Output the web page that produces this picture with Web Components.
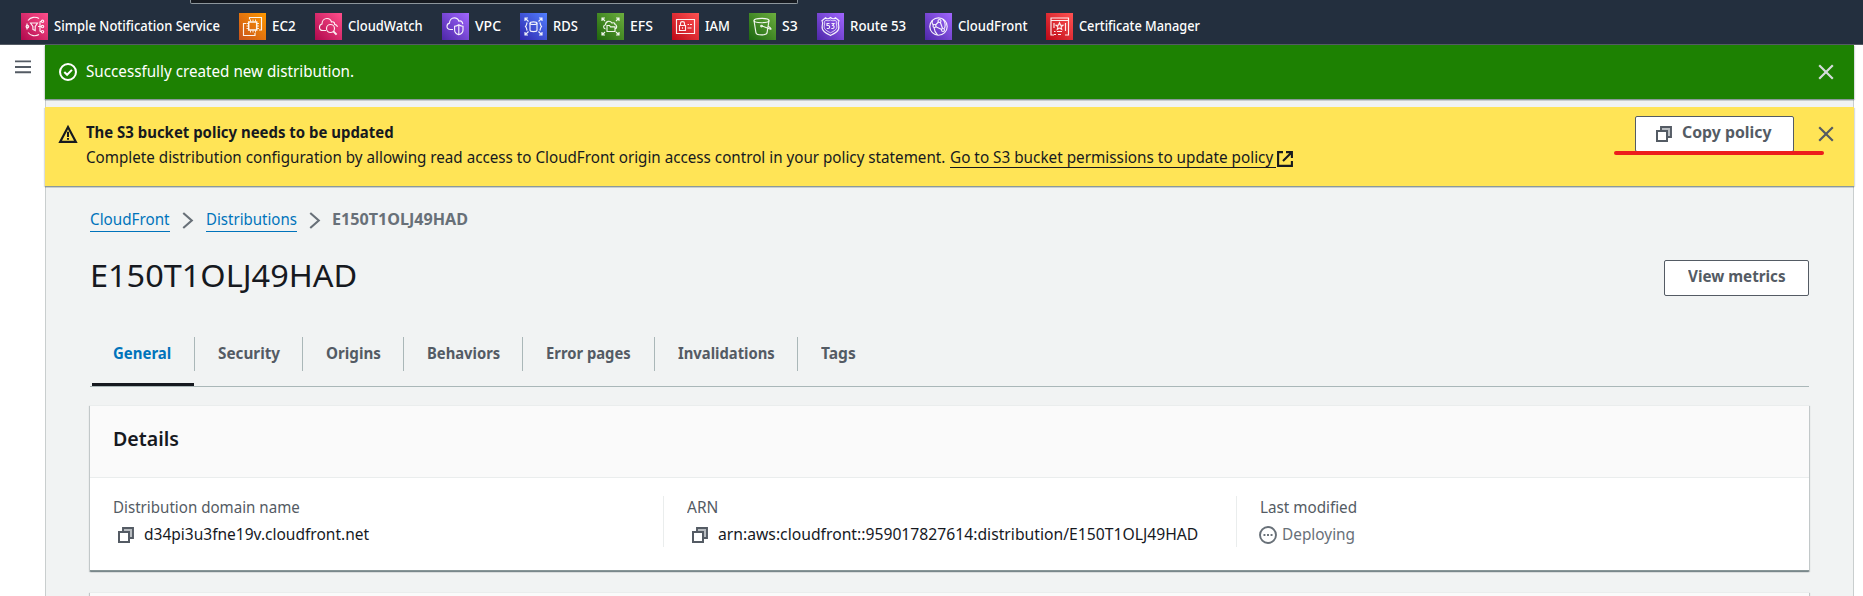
<!DOCTYPE html>
<html lang="en"><head><meta charset="utf-8"><title>CloudFront</title>
<style>
html,body{margin:0;height:100%}
body{font-family:"Noto Sans","Open Sans",sans-serif;font-size:16px;color:#16191f;background:#fff;overflow:hidden}
</style></head><body>
<console-app></console-app>
<script>
const define=(name,html,setup)=>customElements.define(name,class extends HTMLElement{
  connectedCallback(){
    if(this.shadowRoot)return;
    const root=this.attachShadow({mode:'open'});
    root.innerHTML=typeof html==='function'?html(this):html;
    if(setup)setup(this,root);
  }
});

/* A run of text condensed to the width of the console's typeface. */
define('fit-text',el=>`<style>
:host{display:block;flex:none;width:${el.getAttribute('w')}px;white-space:nowrap;overflow:visible}
span{display:inline-block;transform-origin:0 50%;white-space:nowrap}
</style><span><slot></slot></span>`,(el,root)=>{
  const s=root.querySelector('span');
  s.style.transform=`scaleX(${el.getAttribute('w')/s.offsetWidth})`;
});

const ICONS={
  menu:'<path d="M0 1.5h16M0 7.5h16M0 13h16" stroke-width="2"/>',
  close:'<path d="M1.2 1.2l13.600 13.600M14.800 1.200l-13.600 13.600" stroke-width="2.2"/>',
  check:'<circle cx="8" cy="8" r="7.1" stroke-width="1.8"/><path d="M4.7 8l2.5 2.5 4.3-4.4" stroke-width="1.8"/>',
  warning:'<path d="M8 1.8L15 15H1z" stroke-width="1.9"/><path d="M8 6v4.6M8 11.6v1.6" stroke-width="1.8"/>',
  copy:'<path d="M5 4.500V1h10v10h-3.500" fill="#b9bdc1" stroke-width="1.900"/><path d="M1 5h10v10H1z" fill="#fff" stroke-width="2"/>',
  external:'<path d="M6 1.1H1.1v13.8h13.8V10M9 1.1h5.9V7M14.5 1.5L6 10" stroke-width="2.1"/>',
  chevron:'<path d="M4 1l8 7-8 7" stroke-width="2"/>',
  pending:'<circle cx="8" cy="8" r="7.1" stroke-width="1.7"/><path d="M4 8h1.7M7.15 8h1.7M10.3 8H12" stroke-width="1.7"/>'
};
define('ui-icon',el=>{const w=el.getAttribute('w')||16,h=el.getAttribute('h')||w;return `<style>
:host{display:block;flex:none;width:${w}px;height:${h}px}svg{display:block;overflow:visible}
</style><svg width="${w}" height="${h}" viewBox="0 0 16 16" preserveAspectRatio="none" fill="none" stroke="currentColor">${ICONS[el.getAttribute('name')]}</svg>`});

const SERVICES={
  sns:['#b0084d','#ff4f8b','<path d="M7 7.500a8.500 8.500 0 0 1 11-2M7 19.500a8.500 8.500 0 0 0 11 2M6 10.500v6"/><circle cx="6.400" cy="13.500" r="1.300"/><path d="M9.500 10h7l-2.300 3.400v4.200l-2.300-1.200v-3zM17 13.500h3M19 8.500v10M19 8.500h1.500M19 18.500h1.500"/><circle cx="21.500" cy="8.300" r="1.200"/><circle cx="21.500" cy="13.500" r="1.200"/><circle cx="21.500" cy="18.700" r="1.200"/>'],
  ec2:['#c8511b','#ff9900','<path d="M9.700 9h8v8h-8z" stroke-width="1.500"/><path d="M11.500 8.500v-2M14 8.500v-2M16.500 8.500v-2M11.500 19.500v-2M14 19.500v-2M16.500 19.500v-2M9.500 10.500h-2M9.500 13h-2M9.500 15.500h-2M20 10.500h-2M20 13h-2M20 15.500h-2" stroke-width=".9"/><path d="M10.500 6.500v-2h12v12.500h-2.500M7 10.500H4.500v12H16V20"/>'],
  cw:['#b0084d','#ff4f8b','<path d="M11 17.500H8c-2 0-3.500-1.300-3.500-3.300 0-1.800 1-2.800 2.500-3.200C7 8 9 5.500 12 5.500c2.500 0 4 1.600 4.500 3.500 2-.8 3.200.7 3.200 2.400 1.500.2 2.500 1 2.800 2.500"/><circle cx="15.500" cy="15.500" r="4"/><path d="M18.400 18.400l3.200 3.200" stroke-width="2"/>'],
  vpc:['#4d27a8','#a166ff','<path d="M11 16.500H8.500c-2 0-3.500-1.200-3.500-3.200 0-1.700 1-2.800 2.500-3.200C7.500 7 9.500 4.800 12.300 4.800c2.400 0 4 1.500 4.500 3.300 2.500-.8 3.700.8 4 3"/><path d="M16.800 11.700c1.500 1 2.800 1.500 4.200 1.500v3.800c0 2.500-1.800 4-4.200 4.800-2.400-.8-4.200-2.300-4.200-4.800v-3.800c1.400 0 2.700-.5 4.200-1.500zM16.800 12v9.500"/>'],
  rds:['#2e27ad','#527fff','<ellipse cx="13.500" cy="10.200" rx="3.500" ry="1.300"/><path d="M10 10.200v7c0 1.800 7 1.800 7 0v-7M7.300 9.500c-1 1-.3 2.500-1.800 4 1.500 1.500.8 3 1.800 4M19.700 9.500c1 1 .3 2.500 1.800 4-1.500 1.500-.8 3-1.800 4M5 8V5h3M5 5l3.500 3.500M22 8V5h-3M22 5l-3.500 3.500M5 19v3h3M5 22l3.500-3.500M22 19v3h-3M22 22l-3.500-3.500"/>'],
  efs:['#1e660b','#6cae3e','<path d="M10 12.500h2.500l1 1.300h4.500V18.500h-8zM8.500 16c-2.500-.5-2.500-3.800 0-4.300C8.700 8 13 7 15 10c2-.7 3 .3 3 1.500 2 .5 2.300 3.500.5 4.300M5 8V5h3M5 5l3 3M22 8V5h-3M22 5l-3 3M5 19v3h3M5 22l3-3M22 19v3h-3M22 22l-3-3"/>'],
  iam:['#bd0816','#ff5252','<path d="M4.500 6.500h18v14h-18zM7.500 12.500h6v5h-6zM8.500 12.500v-2c0-2.500 4-2.500 4 0v2M10.500 14.200v1.600M15.500 11.500h1.500M18 11.500h2M15.500 15h4"/>'],
  s3:['#1b660f','#6cae3e','<ellipse cx="12.500" cy="7.500" rx="7.500" ry="2.200"/><path d="M5 7.500l2 12.500c1 2.500 10 2.500 11 0l2-12.500M13 13l8 3c1.500.6 1.500-.8-1.500-2.500"/><circle cx="12.500" cy="13" r=".8"/>'],
  route:['#4d27a8','#a166ff','<path d="M13.500 4.500c1.500 1.500 3.500 1.500 5 .2l3.500 3c-1.300 2-.6 3.500-.2 5.300 1 5-4.300 7.500-8.300 9.500-4-2-9.300-4.500-8.300-9.500.4-1.800 1.100-3.300-.2-5.300l3.500-3c1.500 1.300 3.500 1.300 5-.2z"/><path d="M13.500 7c1.500.9 3 .9 4.500.3l1.600 1.300c-.6 1.700-.1 3.100.2 4.500.5 3.400-3 5-6.300 6.700-3.300-1.700-6.800-3.300-6.300-6.700.3-1.400.8-2.800.2-4.500L9 7.300c1.500.6 3 .6 4.500-.3z" stroke-width=".8"/><path d="M12.500 10.500H10v2h1.300c1.800 0 1.800 3 0 3H9.800M14.500 10.500H17l-1.300 2c2 0 1.800 3 0 3h-1.400"/>'],
  cf:['#4d27a8','#a166ff','<circle cx="13.500" cy="13.500" r="8.700"/><circle cx="14.500" cy="8" r="1.500"/><circle cx="9.500" cy="13" r="1.500"/><circle cx="18" cy="17" r="1.500"/><path d="M13.500 9l-3 3M15.300 9.300l2.200 6M10.800 13.700l6 2.800M9 14.500c.3 3 1.500 5.500 3.500 7.500M7.500 7.200c-.8 1.800-.5 3.500 1 4.800M18 6c2 3 3 6 1.500 9.500"/>'],
  acm:['#bd0816','#ff5252','<path d="M8 22H5V5h17.500v17H19M5 7.500h17.500M8 10v5M19.500 10v8"/><path d="M13.500 9.800l1 2.300 2.500.2-1.900 1.600.6 2.500-2.200-1.300-2.200 1.300.6-2.500-1.900-1.600 2.500-.2zM8 18.500h1.500M11 18.500h5M8 21.500h2M12 21.500h3"/>']
};
define('service-link',el=>{const [a,b,p]=SERVICES[el.getAttribute('icon')],id='g';return `<style>
:host{display:flex;align-items:center;gap:6px;width:${el.getAttribute('span')}px;flex:none;color:#fff;font:500 14px/20px "Noto Sans",sans-serif}
svg{display:block;flex:none}
fit-text{margin-top:-2px}
</style><svg width="27" height="27" viewBox="0 0 27 27" fill="none" stroke="#fff" stroke-opacity=".92" stroke-width="1.150"><defs><linearGradient id="${id}" x1="0" y1="1" x2="1" y2="0"><stop stop-color="${a}"/><stop offset="1" stop-color="${b}"/></linearGradient></defs><rect width="27" height="27" fill="url(#${id})" stroke="none"/>${p}</svg><fit-text w="${el.getAttribute('w')}"><slot></slot></fit-text>`});

define('service-bar',`<style>
:host{display:block;height:44px;background:#232f3e;border-bottom:1px solid #545b64;position:relative;box-sizing:content-box}
.search{position:absolute;left:190px;top:0;width:606px;height:3px;background:#161a20;border:1px solid #8d969c;border-top:0;border-radius:0 0 2px 2px}
nav{display:flex;padding:13px 0 0 21px}
</style><div class="search"></div><nav>
<service-link icon="sns" span="218" w="166">Simple Notification Service</service-link>
<service-link icon="ec2" span="76" w="24">EC2</service-link>
<service-link icon="cw" span="127" w="75">CloudWatch</service-link>
<service-link icon="vpc" span="78" w="26">VPC</service-link>
<service-link icon="rds" span="77" w="25">RDS</service-link>
<service-link icon="efs" span="75" w="23">EFS</service-link>
<service-link icon="iam" span="77" w="25">IAM</service-link>
<service-link icon="s3" span="68" w="16">S3</service-link>
<service-link icon="route" span="108" w="56">Route 53</service-link>
<service-link icon="cf" span="121" w="69">CloudFront</service-link>
<service-link icon="acm" span="160" w="121">Certificate Manager</service-link>
</nav>`);

define('ui-button',el=>`<style>
:host{display:flex;align-items:center;justify-content:center;box-sizing:border-box;gap:10px;height:36px;background:#fff;border:1px solid #545b64;border-radius:2px;color:#545b64;font-weight:700;line-height:22px;padding-bottom:4px}
</style><slot></slot>`);

define('flash-bar',`<style>
:host{display:flex;align-items:flex-start;box-sizing:border-box;position:relative;margin:0 -1px;box-shadow:0 1px 0 0 #8b999b,0 2px 0 0 rgba(0,28,36,.12),1px 1px 1px 0 rgba(0,28,36,.15),-1px 1px 1px 0 rgba(0,28,36,.15)}
:host([type=success]){height:54px;background:#1d8102;color:#fff;padding:16px 20px 0 14px}
:host([type=warning]){height:79px;background:#ffe456;color:#16191f;padding:13px 20px 0 14px}
.icon{padding-top:2px}
:host([type=warning]) .icon{padding-top:5px}
.body{flex:1;padding-left:9px}
:host([type=success]) .body{margin-top:-1px}
.dismiss{padding:3px 0 0 24px;color:#d5dbdb}
:host([type=warning]) .dismiss{padding-top:6px;color:#545b64}
.action{margin-top:-4px}
</style><div class="icon"><slot name="icon"></slot></div><div class="body"><slot></slot></div><div class="action"><slot name="action"></slot></div><div class="dismiss"><ui-icon name="close" w="16"></ui-icon></div>`);

define('flash-list',`<style>
:host{display:flex;flex-direction:column;gap:8px}
fit-text{line-height:22px}
.title{font-weight:700;line-height:25px}
.line{display:flex;gap:5px;line-height:25px}
.link{display:flex;height:22px;width:326px;border-bottom:1px solid #16191f;position:relative;line-height:25px}
.link fit-text{line-height:25px}
.line>ui-icon{margin:6px 0 0 -4px}
ui-button{width:159px}
ui-button ui-icon{margin:3px 0 0 -2px}
.mark{position:absolute;right:30px;top:44px;width:210px;height:4px;border-radius:2px;background:#ec1c1c}
</style>
<flash-bar type="success"><ui-icon slot="icon" name="check" w="18"></ui-icon><fit-text w="268">Successfully created new distribution.</fit-text></flash-bar>
<flash-bar type="warning"><ui-icon slot="icon" name="warning" w="18"></ui-icon>
<fit-text class="title" w="308">The S3 bucket policy needs to be updated</fit-text>
<div class="line"><fit-text w="859" style="line-height:25px">Complete distribution configuration by allowing read access to CloudFront origin access control in your policy statement.</fit-text><div class="link"><fit-text w="323">Go to S3 bucket permissions to update policy</fit-text></div><ui-icon name="external" w="16"></ui-icon></div>
<ui-button slot="action"><ui-icon name="copy" w="16"></ui-icon><fit-text w="89">Copy policy</fit-text></ui-button>
<div slot="action" class="mark"></div></flash-bar>`);

define('bread-crumbs',`<style>
:host{display:flex;align-items:center;height:24px;line-height:20px}
.link{color:#0073bb;border-bottom:1px solid #0073bb;height:22px;padding-top:0}
ui-icon{color:#687078;margin:0 9.500px 0 9px}
b{color:#687078;display:block;font-weight:700;margin-top:-2px}
</style><div class="link"><fit-text w="80">CloudFront</fit-text></div><ui-icon name="chevron" w="17"></ui-icon><div class="link"><fit-text w="91">Distributions</fit-text></div><ui-icon name="chevron" w="17"></ui-icon><b><fit-text w="136">E150T1OLJ49HAD</fit-text></b>`);

define('page-heading',`<style>
:host{display:flex;justify-content:space-between;align-items:flex-start;height:36px}
h1{margin:-5px 0 0;font-weight:400;font-size:31px;line-height:40px}
ui-button{width:145px}
</style><h1><fit-text w="267">E150T1OLJ49HAD</fit-text></h1><ui-button><fit-text w="98">View metrics</fit-text></ui-button>`);

define('tab-item',el=>`<style>
:host{display:flex;flex:none;position:relative;box-sizing:border-box;width:${el.getAttribute('span')}px;height:34px;padding:5px 0 0 23px;border-right:1px solid #aab7b8;color:#545b64;font-weight:700;line-height:22px}
:host([last]){border-right:0}
:host([active]){color:#0073bb;padding-left:21px}
:host([active])::after{content:"";position:absolute;left:0;right:0;top:46px;height:3px;background:#16191f}
</style><fit-text w="${el.getAttribute('w')}"><slot></slot></fit-text>`);
define('tab-bar',`<style>
:host{display:flex;height:49px;border-bottom:1px solid #aab7b8;padding-left:2px}
</style><tab-item active span="103" w="58">General</tab-item><tab-item span="108" w="62">Security</tab-item><tab-item span="101" w="55">Origins</tab-item><tab-item span="119" w="73">Behaviors</tab-item><tab-item span="132" w="85">Error pages</tab-item><tab-item span="143" w="97">Invalidations</tab-item><tab-item last span="80" w="35">Tags</tab-item>`);

define('detail-field',`<style>
:host{display:block;box-sizing:border-box;height:51px;border-left:1px solid #eaeded;padding:0 0 0 22.500px;line-height:22px}
:host([first]){border-left-color:transparent;padding-left:22px}
.label{color:#545b64;line-height:22px}
.value{display:flex;align-items:center;margin-top:5px;line-height:22px}
</style><div class="label"><slot name="label"></slot></div><div class="value"><slot></slot></div>`);

define('ui-card',`<style>
:host{display:block;background:#fff;box-shadow:0 1px 1px 0 rgba(0,28,36,.3),1px 1px 1px 0 rgba(0,28,36,.15),-1px 1px 1px 0 rgba(0,28,36,.15)}
header{box-sizing:border-box;height:73px;background:#fafafa;border-top:1px solid #eaeded;border-bottom:1px solid #eaeded;padding:20px 23px 0;font-weight:600;font-size:19px;line-height:26px}
</style><header><slot name="title"></slot></header><slot></slot>`);

define('distribution-details',`<style>
:host{display:block}
ui-card{height:165px;border-bottom:1px solid #879596}
.grid{display:grid;grid-template-columns:573px 573px 1fr;padding-top:18px}
.copy{color:#545b64;margin:2px 10px 0 5px}
.status{color:#687078;margin:2px 5px 0 -1px}
.muted{color:#687078}
</style><ui-card><fit-text slot="title" w="66">Details</fit-text><div class="grid">
<detail-field first><fit-text slot="label" w="187">Distribution domain name</fit-text><ui-icon class="copy" name="copy" w="16"></ui-icon><fit-text w="225">d34pi3u3fne19v.cloudfront.net</fit-text></detail-field>
<detail-field><fit-text slot="label" w="31">ARN</fit-text><ui-icon class="copy" name="copy" w="16"></ui-icon><fit-text w="480">arn:aws:cloudfront::959017827614:distribution/E150T1OLJ49HAD</fit-text></detail-field>
<detail-field><fit-text slot="label" w="97">Last modified</fit-text><ui-icon class="status" name="pending" w="18"></ui-icon><fit-text class="muted" w="73">Deploying</fit-text></detail-field>
</div></ui-card>`);

define('console-app',`<style>
:host{display:flex;flex-direction:column;height:596px;overflow:hidden}
.shell{display:flex;flex:1;min-height:0}
aside{width:45px;flex:none;box-sizing:border-box;padding:15px 0 0 15px;color:#545b64}
main{flex:none;box-sizing:border-box;width:1809px;background:#f1f3f3;border-left:1px solid #c9cece;border-right:1px solid #c9cece;overflow:visible}
.content{padding:22px 44px 0}
page-heading{margin-top:28px}
tab-bar{margin-top:41px}
distribution-details{margin-top:18px}
.next{margin-top:21px}
</style><service-bar></service-bar><div class="shell"><aside><ui-icon name="menu" w="16" h="15"></ui-icon></aside><main><flash-list></flash-list><div class="content"><bread-crumbs></bread-crumbs><page-heading></page-heading><tab-bar></tab-bar><distribution-details></distribution-details><ui-card class="next"></ui-card></div></main></div>`);
</script></body></html>
